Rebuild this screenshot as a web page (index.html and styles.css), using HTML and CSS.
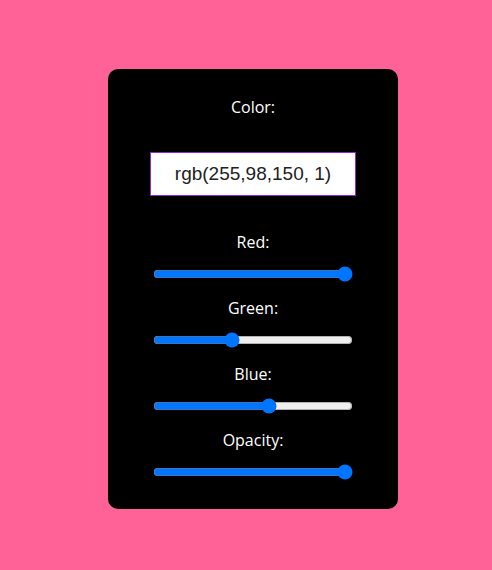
FILE: index.html
```html
<!DOCTYPE html>
<html>
<head>
<meta charset="utf-8">
<link rel="stylesheet" href="styles.css">
</head>
<body>
<div class="card">
  <div class="label label-color">Color:</div>
  <input class="color-value" type="text" value="rgb(255,98,150, 1)">
  <div class="group">
    <div class="label">Red:</div>
    <input class="slider" type="range" min="0" max="255" value="255">
  </div>
  <div class="group">
    <div class="label">Green:</div>
    <input class="slider" type="range" min="0" max="255" value="98">
  </div>
  <div class="group">
    <div class="label">Blue:</div>
    <input class="slider" type="range" min="0" max="255" value="150">
  </div>
  <div class="group">
    <div class="label">Opacity:</div>
    <input class="slider" type="range" min="0" max="1" step="0.01" value="1">
  </div>
</div>
</body>
</html>
```
FILE: styles.css
```css
html, body {
  margin: 0;
  padding: 0;
}
body {
  background: #ff6296;
  width: 492px;
  height: 570px;
  padding-top: 69px;
  box-sizing: border-box;
  font-family: "Open Sans", "Liberation Sans", sans-serif;
}
.card {
  width: 290px;
  margin-left: 108px;
  background: #000;
  border-radius: 10px;
  padding: 27px 0 29px;
  box-sizing: border-box;
  display: flex;
  flex-direction: column;
  align-items: center;
  gap: 15px;
}
.label {
  color: #fff;
  font-size: 16px;
  line-height: 22px;
  text-align: center;
}
.label-color {
  margin-bottom: 19px;
}
.color-value {
  width: 206px;
  height: 44px;
  box-sizing: border-box;
  border: 1px solid #8a2be2;
  background: #fff;
  color: #222;
  font-family: "Liberation Sans", Arial, sans-serif;
  font-size: 19px;
  text-align: center;
  padding: 0;
  margin: 0 0 20px;
  outline: none;
}
.group {
  display: flex;
  flex-direction: column;
  align-items: center;
  gap: 13px;
}
.slider {
  width: 200px;
  height: 16px;
  margin: 0;
}
```
